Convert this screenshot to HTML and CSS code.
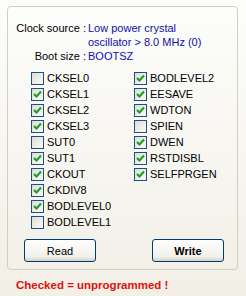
FILE: index.html
```html
<!DOCTYPE html>
<html>
<head>
<meta charset="utf-8">
<link rel="stylesheet" href="styles.css">
<title>Fuses</title>
</head>
<body>
<div class="page">
  <div class="group">
    <div class="info">
      <span class="lbl">Clock source :</span>
      <span class="val">Low power crystal<br>oscillator &gt; 8.0 MHz (0)</span>
      <span class="lbl">Boot size :</span>
      <span class="val">BOOTSZ</span>
    </div>
    <div class="fuses">
      <ul class="col">
        <li><span class="box"></span>CKSEL0</li>
        <li><span class="box on"></span>CKSEL1</li>
        <li><span class="box on"></span>CKSEL2</li>
        <li><span class="box on"></span>CKSEL3</li>
        <li><span class="box"></span>SUT0</li>
        <li><span class="box on"></span>SUT1</li>
        <li><span class="box on"></span>CKOUT</li>
        <li><span class="box on"></span>CKDIV8</li>
        <li><span class="box on"></span>BODLEVEL0</li>
        <li><span class="box"></span>BODLEVEL1</li>
      </ul>
      <ul class="col">
        <li><span class="box on"></span>BODLEVEL2</li>
        <li><span class="box on"></span>EESAVE</li>
        <li><span class="box on"></span>WDTON</li>
        <li><span class="box"></span>SPIEN</li>
        <li><span class="box on"></span>DWEN</li>
        <li><span class="box on"></span>RSTDISBL</li>
        <li><span class="box on"></span>SELFPRGEN</li>
      </ul>
    </div>
    <div class="buttons">
      <button class="btn">Read</button>
      <button class="btn bold">Write</button>
    </div>
  </div>
  <p class="note">Checked = unprogrammed !</p>
</div>
<script>
var boxes=document.querySelectorAll(".box.on");
for(var i=0;i<boxes.length;i++){
  boxes[i].innerHTML='<svg width="11" height="11" viewBox="0 0 11 11"><path d="M2 5 L4.5 7.5 L9 2.5" fill="none" stroke="#21a121" stroke-width="2.2"/></svg>';
}
</script>
</body>
</html>
```
FILE: styles.css
```css
*{margin:0;padding:0;box-sizing:border-box;}
html,body{height:100%;}
body{background:linear-gradient(#fdfdfc,#f1efe6);font-family:"Liberation Sans",Arial,sans-serif;font-size:11px;color:#000;}
.page{width:246px;height:296px;padding:6px 8px 0 7px;}
.group{width:231px;height:264px;border:1px solid #d0d0bf;border-radius:4px;padding:14px 0 0 0;}
.info{display:grid;grid-template-columns:78px auto;column-gap:2px;line-height:14px;}
.info .lbl{text-align:right;}
.info .val{color:#1010a8;}
.fuses{display:flex;margin-top:7px;padding-left:23px;}
.col{list-style:none;width:116px;}
.col li{height:16px;display:flex;align-items:center;white-space:nowrap;}
.box{width:13px;height:13px;border:1px solid #1c5180;background:linear-gradient(135deg,#dcdcd7,#fbfbf9);margin-right:3px;display:flex;align-items:center;justify-content:center;flex:none;}
.box svg{display:block;}
.buttons{display:flex;gap:56px;margin-top:9px;padding-left:16px;}
.btn{width:72px;height:23px;border:1px solid #003c74;border-radius:3px;background:linear-gradient(#ffffff,#f0f0ea 80%,#d6d0c5);font-family:"Liberation Sans",Arial,sans-serif;font-size:11px;color:#000;}
.btn.bold{font-weight:bold;}
.note{margin-top:8px;padding-left:9px;color:#e01010;font-weight:bold;font-size:11.5px;line-height:14px;}
```
